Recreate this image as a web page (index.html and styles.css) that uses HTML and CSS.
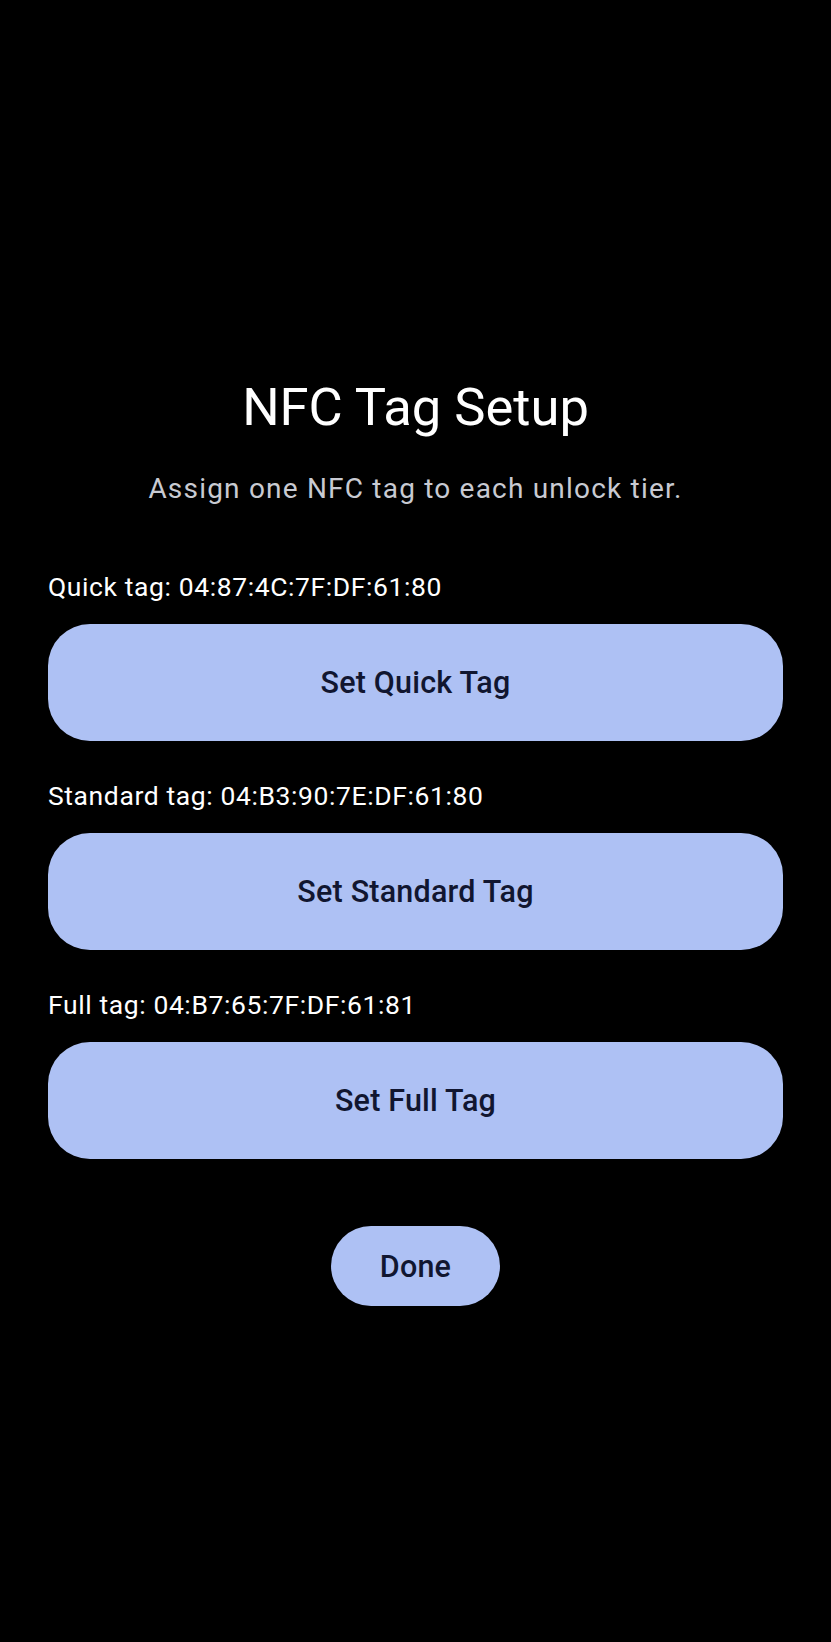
FILE: index.html
```html
<!DOCTYPE html>
<html lang="en">
<head>
<meta charset="utf-8">
<title>NFC Tag Setup</title>
<link rel="stylesheet" href="styles.css">
</head>
<body>
<main class="setup">
  <h1 class="setup-title">NFC Tag Setup</h1>
  <p class="setup-subtitle">Assign one NFC tag to each unlock tier.</p>

  <section class="tier">
    <p class="tier-label">Quick tag: 04:87:4C:7F:DF:61:80</p>
    <button class="tier-button" type="button">Set Quick Tag</button>
  </section>

  <section class="tier">
    <p class="tier-label">Standard tag: 04:B3:90:7E:DF:61:80</p>
    <button class="tier-button" type="button">Set Standard Tag</button>
  </section>

  <section class="tier">
    <p class="tier-label">Full tag: 04:B7:65:7F:DF:61:81</p>
    <button class="tier-button" type="button">Set Full Tag</button>
  </section>

  <button class="done-button" type="button">Done</button>
</main>
</body>
</html>
```
FILE: styles.css
```css
html, body {
  margin: 0;
  padding: 0;
  background: #000;
}

body {
  font-family: Roboto, "Noto Sans", "Liberation Sans", sans-serif;
  color: #fff;
  min-height: 1642px;
}

.setup {
  display: flex;
  flex-direction: column;
  align-items: stretch;
  padding: 376px 48px 0;
}

.setup-title {
  margin: 0;
  font-size: 52.5px;
  line-height: 62px;
  font-weight: 400;
  text-align: center;
  color: #fff;
}

.setup-subtitle {
  margin: 33px 0 0;
  font-size: 28px;
  line-height: 36px;
  letter-spacing: 1.2px;
  text-align: center;
  color: #c8cad2;
}

.tier {
  display: flex;
  flex-direction: column;
  gap: 20px;
  margin-top: 38px;
}

.setup-subtitle + .tier {
  margin-top: 63px;
}

.tier-label {
  margin: 0;
  font-size: 26.5px;
  line-height: 34px;
  letter-spacing: 0.6px;
  color: #fff;
}

.tier-button,
.done-button {
  border: none;
  background: #aec1f4;
  color: #111630;
  font-family: inherit;
  font-weight: 500;
  font-size: 30.5px;
  letter-spacing: 0.2px;
  cursor: pointer;
}

.tier-button {
  height: 117px;
  border-radius: 42px;
}

.done-button {
  align-self: center;
  margin-top: 67px;
  height: 80px;
  padding: 0 49px;
  border-radius: 40px;
}
```
